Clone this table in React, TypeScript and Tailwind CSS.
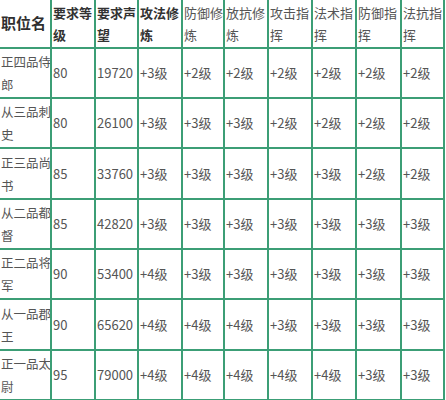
import React from "react";

const headers = ["职位名", "要求等级", "要求声望", "攻法修炼", "防御修炼", "放抗修炼", "攻击指挥", "法术指挥", "防御指挥", "法抗指挥"];
const boldHeaders = [1, 2, 3];

const rows: [string, string, string, number[]][] = [
  ["正四品侍", "郎", "80", [19720, 3, 2, 2, 2, 2, 2, 2]],
  ["从三品刺", "史", "80", [26100, 3, 3, 3, 2, 2, 2, 2]],
  ["正三品尚", "书", "85", [33760, 3, 3, 3, 3, 3, 2, 2]],
  ["从二品都", "督", "85", [42820, 3, 3, 3, 3, 3, 3, 3]],
  ["正二品将", "军", "90", [53400, 4, 3, 3, 3, 3, 3, 3]],
  ["从一品郡", "王", "90", [65620, 4, 4, 4, 3, 3, 3, 3]],
  ["正一品太", "尉", "95", [79000, 4, 4, 4, 4, 4, 3, 3]],
];

const cell = "border-r-2 border-b-2 border-[#3c9e76] flex items-center pl-px overflow-hidden whitespace-nowrap";

export default function App() {
  return (
    <div className="w-[446px] h-[400px] bg-white overflow-hidden" style={{ fontFamily: '"Noto Sans CJK SC", "Noto Sans", sans-serif' }}>
      <div className="grid grid-cols-[52px_44px_43px_44px_42px_44px_44px_44px_45px_43px] grid-rows-[49px_50px_50px_51px_50px_50px_51px_50px]">
        {headers.map((h, i) =>
          i === 0 ? (
            <div key={h} className={`${cell} text-[15px] font-bold text-[#2f2f2f] pl-[2px]`}>{h}</div>
          ) : (
            <div
              key={h}
              className={`${cell} text-[13px] leading-[22px] ${boldHeaders.includes(i) ? "font-bold text-[#333]" : "text-[#555]"}`}
            >
              <div>
                <div>{h.slice(0, 3)}</div>
                <div>{h.slice(3)}</div>
              </div>
            </div>
          )
        )}
        {rows.map(([a, b, lvl, vals]) => (
          <React.Fragment key={a}>
            <div className={`${cell} text-[12.5px] leading-[23px] text-[#555] pl-[2px]`}>
              <div>
                <div>{a}</div>
                <div>{b}</div>
              </div>
            </div>
            <div className={`${cell} text-[13px] text-[#555]`}>{lvl}</div>
            {vals.map((v, j) => (
              <div key={j} className={`${cell} text-[13px] text-[#555]`}>
                {j === 0 ? v : `+${v}级`}
              </div>
            ))}
          </React.Fragment>
        ))}
      </div>
    </div>
  );
}
